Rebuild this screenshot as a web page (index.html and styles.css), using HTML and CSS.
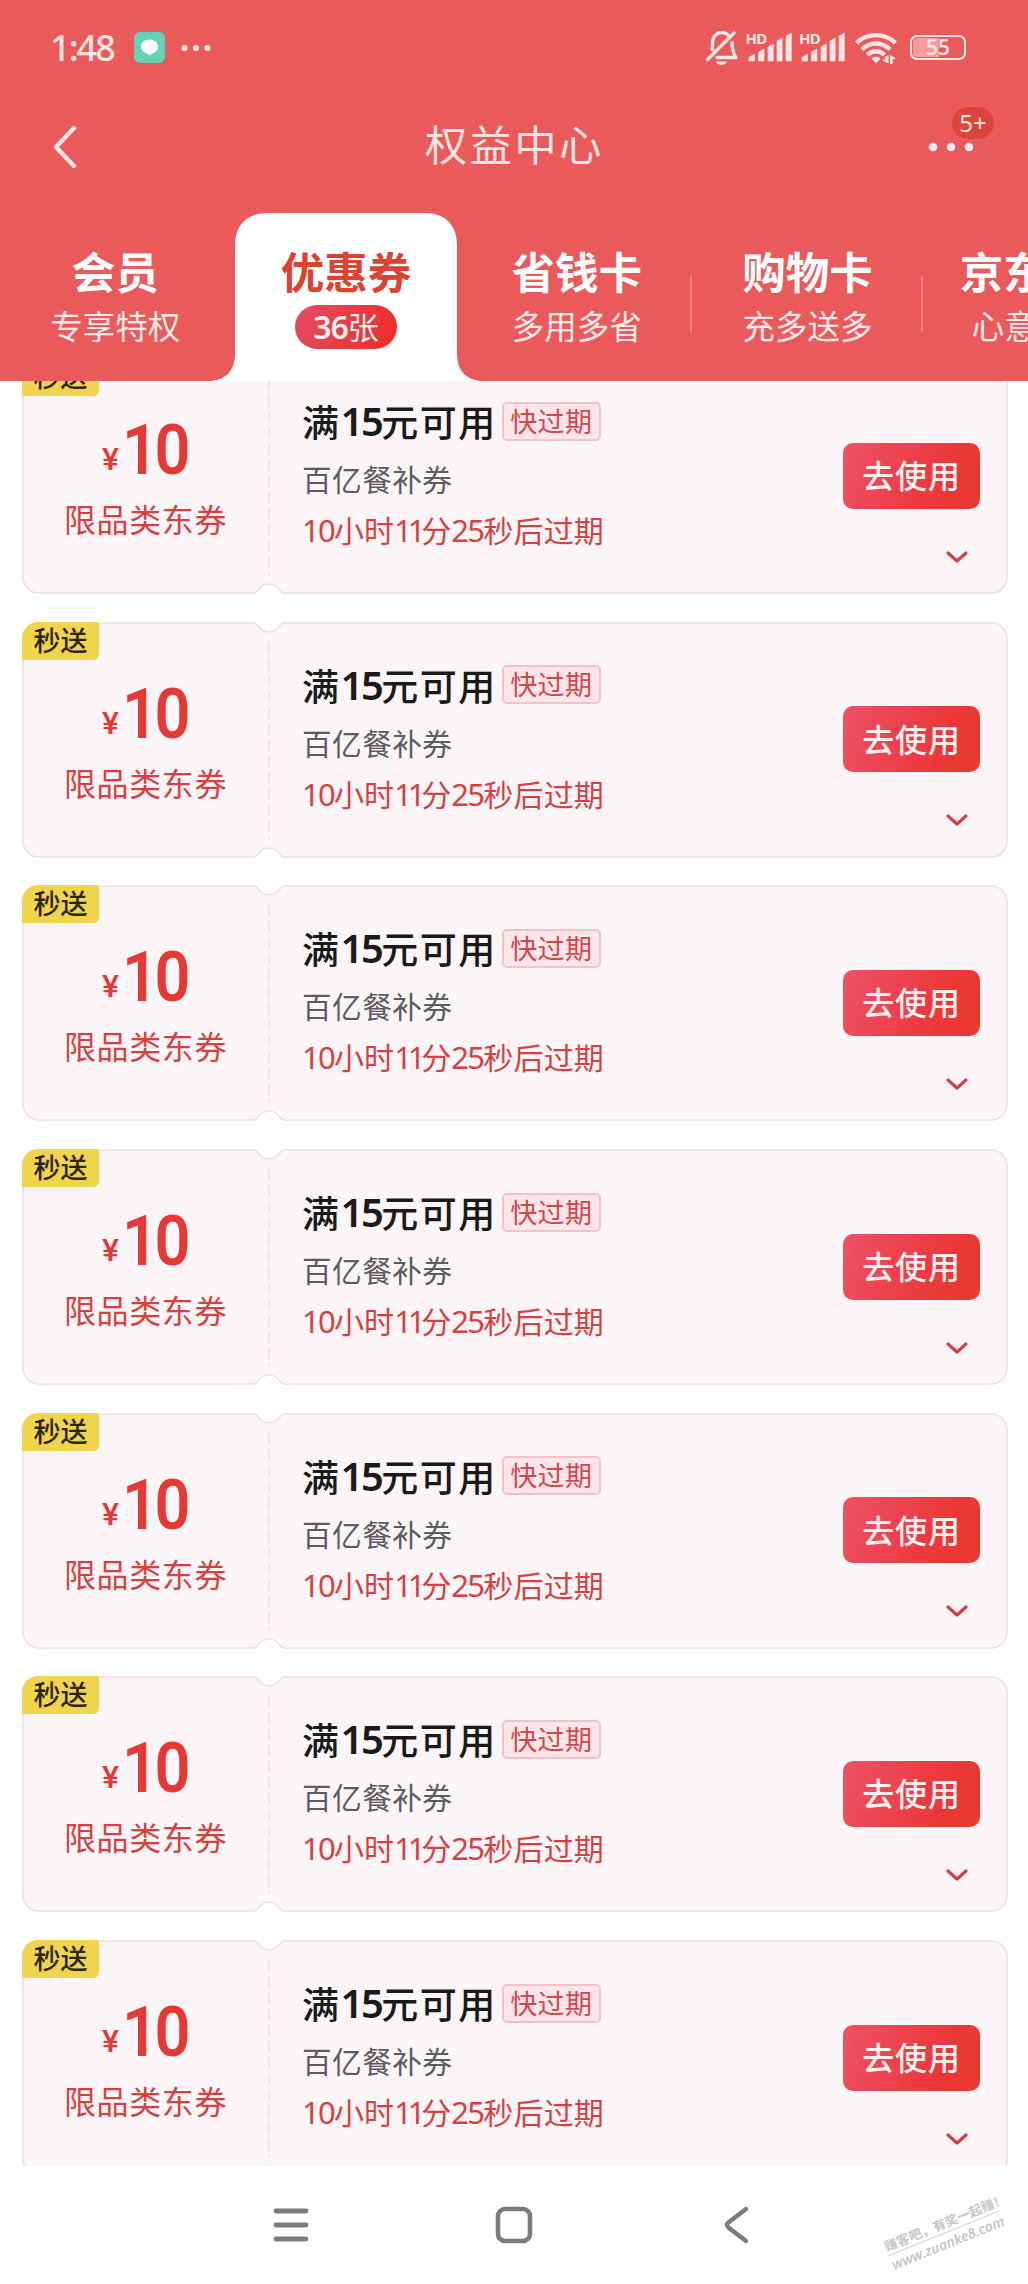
FILE: index.html
```html
<!DOCTYPE html>
<html lang="zh-CN">
<head>
<meta charset="utf-8">
<title>权益中心</title>
<link rel="stylesheet" href="styles.css">
</head>
<body>
<svg class="defs" width="0" height="0" aria-hidden="true">
  <symbol id="ticket" viewBox="0 0 986 236">
    <path d="M17 1H232.500C236 1 237 10 247 10S258 1 261.500 1H969A16 16 0 0 1 985 17V219A16 16 0 0 1 969 235H261.500C258 235 257 226 247 226S236 235 232.500 235H17A16 16 0 0 1 1 219V17A16 16 0 0 1 17 1Z" fill="#fcf5f8" stroke="#f1dde2" stroke-width="1.600"/>
    <path d="M247 20V218" stroke="#f9e4e8" stroke-width="2.400" stroke-dasharray="12 4.200"/>
  </symbol>
  <symbol id="down" viewBox="0 0 24 14"><path d="M3 3L12 11L21 3" fill="none" stroke="#d33f45" stroke-width="3.200" stroke-linecap="round" stroke-linejoin="round"/></symbol>
  <symbol id="signal" viewBox="0 0 46 34">
    <path d="M3 30V26.500L8.500 23V30ZM12.500 30V21L18 18V30ZM22 30V16L27.300 13V30ZM31 30V10L36.200 7V30ZM40 30V5L45.300 2V30Z" fill="#fde5e3" stroke="#fde5e3" stroke-width=".6" stroke-linejoin="round"/>
  </symbol>
</svg>
<div class="screen">
  <header class="header">
    <div class="status">
      <span class="clock">1:48</span>
      <svg class="app" width="31" height="31" viewBox="0 0 31 31"><rect width="31" height="31" rx="6" fill="#62d3b4"/><path d="M15.500 7.500C20.500 7.500 24 10.500 24 14.800C24 18.500 21 21 18 21.600L15.500 23.500L13 21.600C10 21 7 18.500 7 14.800C7 10.500 10.500 7.500 15.500 7.500Z" fill="#fff"/></svg>
      <svg class="more" width="32" height="8" viewBox="0 0 32 8"><g fill="#fde5e3"><circle cx="4.500" cy="4" r="3.100"/><circle cx="16" cy="4" r="3.100"/><circle cx="27.500" cy="4" r="3.100"/></g></svg>
      <svg class="bell" width="34" height="36" viewBox="0 0 34 36"><g fill="none" stroke="#fde5e3" stroke-width="3.400" stroke-linecap="round" stroke-linejoin="round"><path d="M2.500 29.500L29 3M23 5C20 1.800 14 1.500 10.500 5C7.500 8 7.500 11 7.300 19.500M27 12.500C27 20 28 23 31 27.500H12"/></g><path d="M11 31.500H22C21 36 12 36 11 31.500Z" fill="#fde5e3"/></svg>
      <span class="sim"><b>HD</b><svg width="46" height="34"><use href="#signal"/></svg></span>
      <span class="sim"><b>HD</b><svg width="46" height="34"><use href="#signal"/></svg></span>
      <svg class="wifi" width="44" height="34" viewBox="0 0 44 34"><g fill="none" stroke="#fde5e3" stroke-width="4.400"><path d="M2.500 12C13 1.500 31 1.500 41.500 12M8 18.500C16 10.500 28 10.500 36 18.500M13.500 24C18.500 19 25.500 19 30.500 24"/></g><path d="M17.500 27.500C20 25 24 25 26.500 27.500L22 32.500ZM33 32L28 28.500H31V26L34.500 24V32ZM36 33V23.500L42 28H38.800V33Z" fill="#fde5e3"/></svg>
      <span class="battery">55</span>
    </div>
    <div class="nav">
      <svg class="back" width="26" height="44" viewBox="0 0 26 44"><path d="M22 3L4 22L22 41" fill="none" stroke="#fde5e3" stroke-width="4.400" stroke-linecap="round" stroke-linejoin="round"/></svg>
      <h1>权益中心</h1>
      <div class="menu">
        <svg width="46" height="10" viewBox="0 0 46 10"><g fill="#fde9e7"><circle cx="5" cy="5" r="4.300"/><circle cx="23" cy="5" r="4.300"/><circle cx="41" cy="5" r="4.300"/></g></svg>
        <span class="count">5+</span>
      </div>
    </div>
    <div class="tabs">
      <div class="tab"><b>会员</b><span>专享特权</span></div>
      <div class="tab active">
        <svg class="shape" width="276" height="168" viewBox="0 0 276 168"><path d="M0 168C17 168 27 158 27 141V32C27 12 39 0 59 0H217C237 0 249 12 249 32V141C249 158 259 168 276 168Z" fill="#fff"/></svg>
        <b>优惠券</b><span class="pill"><i>36</i>张</span>
      </div>
      <div class="tab line"><b>省钱卡</b><span>多用多省</span></div>
      <div class="tab line"><b>购物卡</b><span>充多送多</span></div>
      <div class="tab cut"><b>京东</b><span>心意</span></div>
    </div>
  </header>
  <main class="coupons">
    <article class="coupon">
      <svg class="bg"><use href="#ticket"/></svg><span class="tag">秒送</span>
      <div class="value"><p class="price"><small>¥</small><b>10</b></p><p class="kind">限品类东券</p></div>
      <div class="info"><h2>满<i>15</i>元可用<em>快过期</em></h2><p class="name">百亿餐补券</p><p class="time"><i>10</i>小时<i class="t">11</i>分<i>25</i>秒后过期</p></div>
      <div class="act"><button>去使用</button><svg><use href="#down"/></svg></div>
    </article>
    <article class="coupon">
      <svg class="bg"><use href="#ticket"/></svg><span class="tag">秒送</span>
      <div class="value"><p class="price"><small>¥</small><b>10</b></p><p class="kind">限品类东券</p></div>
      <div class="info"><h2>满<i>15</i>元可用<em>快过期</em></h2><p class="name">百亿餐补券</p><p class="time"><i>10</i>小时<i class="t">11</i>分<i>25</i>秒后过期</p></div>
      <div class="act"><button>去使用</button><svg><use href="#down"/></svg></div>
    </article>
    <article class="coupon">
      <svg class="bg"><use href="#ticket"/></svg><span class="tag">秒送</span>
      <div class="value"><p class="price"><small>¥</small><b>10</b></p><p class="kind">限品类东券</p></div>
      <div class="info"><h2>满<i>15</i>元可用<em>快过期</em></h2><p class="name">百亿餐补券</p><p class="time"><i>10</i>小时<i class="t">11</i>分<i>25</i>秒后过期</p></div>
      <div class="act"><button>去使用</button><svg><use href="#down"/></svg></div>
    </article>
    <article class="coupon">
      <svg class="bg"><use href="#ticket"/></svg><span class="tag">秒送</span>
      <div class="value"><p class="price"><small>¥</small><b>10</b></p><p class="kind">限品类东券</p></div>
      <div class="info"><h2>满<i>15</i>元可用<em>快过期</em></h2><p class="name">百亿餐补券</p><p class="time"><i>10</i>小时<i class="t">11</i>分<i>25</i>秒后过期</p></div>
      <div class="act"><button>去使用</button><svg><use href="#down"/></svg></div>
    </article>
    <article class="coupon">
      <svg class="bg"><use href="#ticket"/></svg><span class="tag">秒送</span>
      <div class="value"><p class="price"><small>¥</small><b>10</b></p><p class="kind">限品类东券</p></div>
      <div class="info"><h2>满<i>15</i>元可用<em>快过期</em></h2><p class="name">百亿餐补券</p><p class="time"><i>10</i>小时<i class="t">11</i>分<i>25</i>秒后过期</p></div>
      <div class="act"><button>去使用</button><svg><use href="#down"/></svg></div>
    </article>
    <article class="coupon">
      <svg class="bg"><use href="#ticket"/></svg><span class="tag">秒送</span>
      <div class="value"><p class="price"><small>¥</small><b>10</b></p><p class="kind">限品类东券</p></div>
      <div class="info"><h2>满<i>15</i>元可用<em>快过期</em></h2><p class="name">百亿餐补券</p><p class="time"><i>10</i>小时<i class="t">11</i>分<i>25</i>秒后过期</p></div>
      <div class="act"><button>去使用</button><svg><use href="#down"/></svg></div>
    </article>
    <article class="coupon">
      <svg class="bg"><use href="#ticket"/></svg><span class="tag">秒送</span>
      <div class="value"><p class="price"><small>¥</small><b>10</b></p><p class="kind">限品类东券</p></div>
      <div class="info"><h2>满<i>15</i>元可用<em>快过期</em></h2><p class="name">百亿餐补券</p><p class="time"><i>10</i>小时<i class="t">11</i>分<i>25</i>秒后过期</p></div>
      <div class="act"><button>去使用</button><svg><use href="#down"/></svg></div>
    </article>
  </main>
  <footer class="keys">
    <svg width="40" height="40" viewBox="0 0 40 40"><path d="M5 6H35M5 20H35M5 34H35" stroke="#7c7c7c" stroke-width="4.800" stroke-linecap="round"/></svg>
    <svg width="40" height="40" viewBox="0 0 40 40"><rect x="4" y="4" width="32" height="32" rx="7" fill="none" stroke="#7c7c7c" stroke-width="4.600"/></svg>
    <svg width="40" height="40" viewBox="0 0 40 40"><path d="M29 4L12 17Q8 20 12 23L29 36" fill="none" stroke="#7c7c7c" stroke-width="4.400" stroke-linecap="round" stroke-linejoin="round"/></svg>
    <div class="mark"><span>赚客吧，有奖一起赚！</span><span class="url">www.zuanke8.com</span></div>
  </footer>
</div>
</body>
</html>
```
FILE: styles.css
```css
* { box-sizing: border-box; margin: 0; padding: 0; }
body { background: #fff; font-family: "Noto Sans CJK SC", sans-serif; }
i, em { font-style: normal; }
.defs { display: block; position: absolute; }
.screen { width: 1028px; height: 2284px; overflow: hidden; display: flex; flex-direction: column; }

.header { height: 381px; flex: none; background: #eb5a5b; color: #fff; display: flex; flex-direction: column; }
.status { height: 95px; padding-left: 50px; display: flex; align-items: center; color: #fde5e3; }
.clock { width: 84px; font: 500 36px/36px "Noto Sans", sans-serif; letter-spacing: -1.900px; }
.more { margin-left: 15px; }
.bell { margin-left: auto; }
.sim { position: relative; width: 46px; height: 34px; margin-left: 7px; }
.sim + .sim { margin-left: 7.500px; }
.bell + .sim { margin-left: 7px; }
.sim b { position: absolute; left: 0; top: 0; font: 700 15px/14px "Noto Sans", sans-serif; letter-spacing: -.8px; }
.sim svg { display: block; }
.wifi { margin-left: 9px; }
.battery { width: 56px; height: 25px; margin: 0 62px 0 12px; border: 2.500px solid #fde5e3; border-radius: 7px; background: linear-gradient(90deg, #f39c9b 52%, transparent 52%) content-box; padding: 1px; font: 600 21px/18px "Noto Sans", sans-serif; text-align: center; }

.nav { height: 103px; padding: 0 54px 0 52px; display: flex; align-items: center; justify-content: space-between; }
.back { display: block; }
.nav h1 { font-size: 42px; font-weight: 400; line-height: 60px; letter-spacing: 2.700px; color: #fde5e3; padding: 0 0 7px 23px; }
.menu { position: relative; height: 10px; display: flex; }
.count { position: absolute; left: 24px; top: -35px; width: 42px; height: 32px; border-radius: 16px; background: #dd443c; font: 400 24px/32px "Noto Sans", sans-serif; text-align: center; color: #fde5e3; }

.tabs { height: 183px; display: flex; overflow: hidden; }
.tab { position: relative; flex: none; width: 230.700px; padding-top: 45px; display: flex; flex-direction: column; align-items: center; }
.tab b { font-size: 43.500px; line-height: 56px; font-weight: 700; position: relative; }
.tab span { position: relative; font-size: 32.500px; line-height: 48px; color: #fdeae9; margin-top: 1.500px; }
.tab.line::after { content: ""; position: absolute; right: 0; top: 78px; width: 2px; height: 56px; background: #f07c7c; }
.tab.active b { color: #dc4230; }
.shape { position: absolute; left: -22.500px; top: 15px; }
.tab.active .pill { width: 102px; height: 44px; margin-top: 5.500px; border-radius: 22px; background: linear-gradient(110deg, #e64c60, #ec2c29); line-height: 42px; font-size: 31px; text-align: center; color: #fff0ef; }
.pill i { font: 600 32px/42px "Noto Sans", sans-serif; letter-spacing: -1px; }
.tab.cut { align-items: flex-start; padding-left: 37px; }
.tab.cut span { padding-left: 12px; }

.coupons { height: 1785px; flex: none; overflow: hidden; padding: 0 20px 0 22px; display: flex; flex-direction: column; gap: 27.650px; }
.coupon { position: relative; flex: none; height: 236px; display: flex; }
.coupon:first-child { margin-top: -22.800px; }
.bg { position: absolute; left: 0; top: 0; width: 986px; height: 236px; }
.tag { position: absolute; left: 0; top: 0; width: 77px; height: 38px; border-radius: 16px 2px 6px 0; background: #f0d44c; color: #2b2410; font-size: 27px; font-weight: 500; line-height: 36px; text-align: center; }
.value { position: relative; width: 247px; padding-top: 60px; }
.price { height: 64px; padding-left: 80px; display: flex; font: 600 70px/64px Roboto, sans-serif; color: #e63936; white-space: nowrap; }
.price small { width: 20px; font: 500 32px/40px Roboto, sans-serif; padding-top: 21px; }
.price b { font-weight: 600; letter-spacing: -4px; transform: scaleX(.9); transform-origin: 0 50%; }
.kind { margin-top: 14px; padding-left: 42px; font-size: 32px; line-height: 44px; letter-spacing: .6px; color: #d8403f; }
.info { position: relative; flex: 1; padding: 38px 0 0 33px; }
.info h2 { display: flex; align-items: center; height: 50px; font-size: 37px; font-weight: 500; letter-spacing: 1.500px; color: #1a1a1a; white-space: nowrap; }
.info h2 i { font: 600 40px/50px "Noto Sans", sans-serif; letter-spacing: -2.500px; }
.info em { width: 99px; height: 39px; margin-left: 5px; border: 2px solid #efc3cb; border-radius: 5px; background: #fde5ea; color: #d2474a; font-size: 27px; font-weight: 400; line-height: 34px; letter-spacing: .4px; text-align: center; }
.name { margin-top: 11px; font-size: 29.700px; line-height: 44px; letter-spacing: .4px; color: #5c5c5f; }
.time { margin-top: 6px; font-size: 30px; line-height: 44px; letter-spacing: .2px; color: #d8403f; white-space: nowrap; }
.time i { font-family: "Noto Sans", sans-serif; font-size: 31px; letter-spacing: -1.800px; }
.time .t { letter-spacing: -4.300px; }
.act { position: relative; width: 165px; padding-top: 84.500px; }
.act button { display: block; width: 137px; height: 66px; border: 0; border-radius: 10px; background: linear-gradient(110deg, #ee5064 5%, #ec3a40 60%, #e93732 85%); color: #fff0ef; font: 500 32px/62px "Noto Sans CJK SC", sans-serif; letter-spacing: .8px; padding-bottom: 3px; }
.act svg { display: block; width: 24px; height: 14px; margin: 41px 0 0 102px; }

.keys { position: relative; height: 118px; display: flex; justify-content: center; gap: 183px; }
.keys > svg { margin-top: 39px; }
.mark { position: absolute; left: 884px; top: 46px; width: 134px; transform: rotate(-22deg); color: #c6c6c6; font-size: 13px; line-height: 18px; font-weight: 700; white-space: nowrap; }
.mark span { display: block; }
.mark .url { border-top: 1px solid #d4d4d4; width: 120px; font: italic 600 14px/20px "Noto Sans", sans-serif; }
```
